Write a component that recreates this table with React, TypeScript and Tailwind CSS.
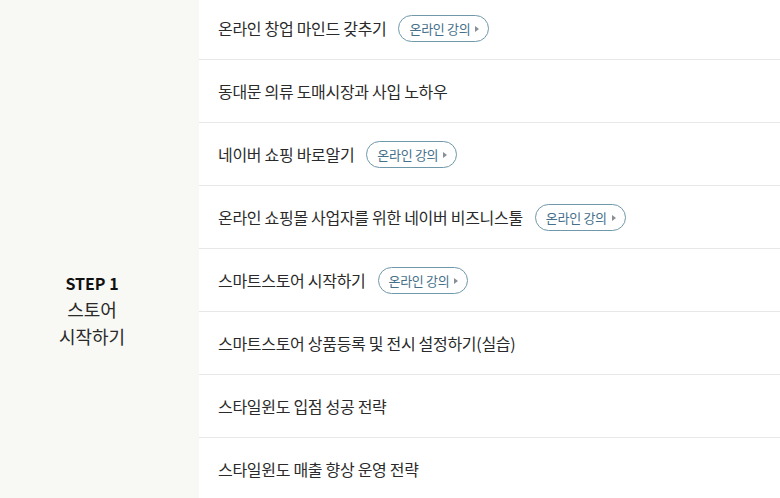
import { FC } from "react";

type Lesson = { title: string; online?: boolean };

const lessons: Lesson[] = [
  { title: "온라인 창업 마인드 갖추기", online: true },
  { title: "동대문 의류 도매시장과 사입 노하우" },
  { title: "네이버 쇼핑 바로알기", online: true },
  { title: "온라인 쇼핑몰 사업자를 위한 네이버 비즈니스툴", online: true },
  { title: "스마트스토어 시작하기", online: true },
  { title: "스마트스토어 상품등록 및 전시 설정하기(실습)" },
  { title: "스타일윈도 입점 성공 전략" },
  { title: "스타일윈도 매출 향상 운영 전략" },
];

const OnlineBadge: FC = () => (
  <span className="ml-[12px] inline-flex h-[27px] items-center gap-[5px] rounded-full border border-[#6f98aa] pl-[10px] pr-[9px] text-[13px] leading-none tracking-[-0.3px] text-[#46708a]">
    온라인 강의
    <svg width="4" height="6" viewBox="0 0 4 6" className="mt-[1px]">
      <path d="M0 0 L4 3 L0 6 Z" fill="#8a8f93" />
    </svg>
  </span>
);

export default function App() {
  return (
    <div
      className="flex h-[498px] w-[780px] overflow-hidden bg-white text-[#2a2a2a]"
      style={{ fontFamily: '"Noto Sans CJK KR", "Noto Sans", sans-serif' }}
    >
      <div className="flex w-[199px] shrink-0 flex-col items-center bg-[#f8f8f4] pr-[15px] pt-[270px] text-center">
        <div className="text-[16px] font-bold leading-[26px] text-[#111]">STEP 1</div>
        <div className="text-[18px] leading-[27px]">스토어</div>
        <div className="text-[18px] leading-[27px]">시작하기</div>
      </div>
      <div className="-mt-[3px] flex-1">
        {lessons.map((item) => (
          <div
            key={item.title}
            className="flex h-[63px] items-center border-b border-[#e8e8e8] pl-[19px]"
          >
            <span className="text-[16px] leading-none tracking-[-0.3px]">{item.title}</span>
            {item.online && <OnlineBadge />}
          </div>
        ))}
      </div>
    </div>
  );
}
